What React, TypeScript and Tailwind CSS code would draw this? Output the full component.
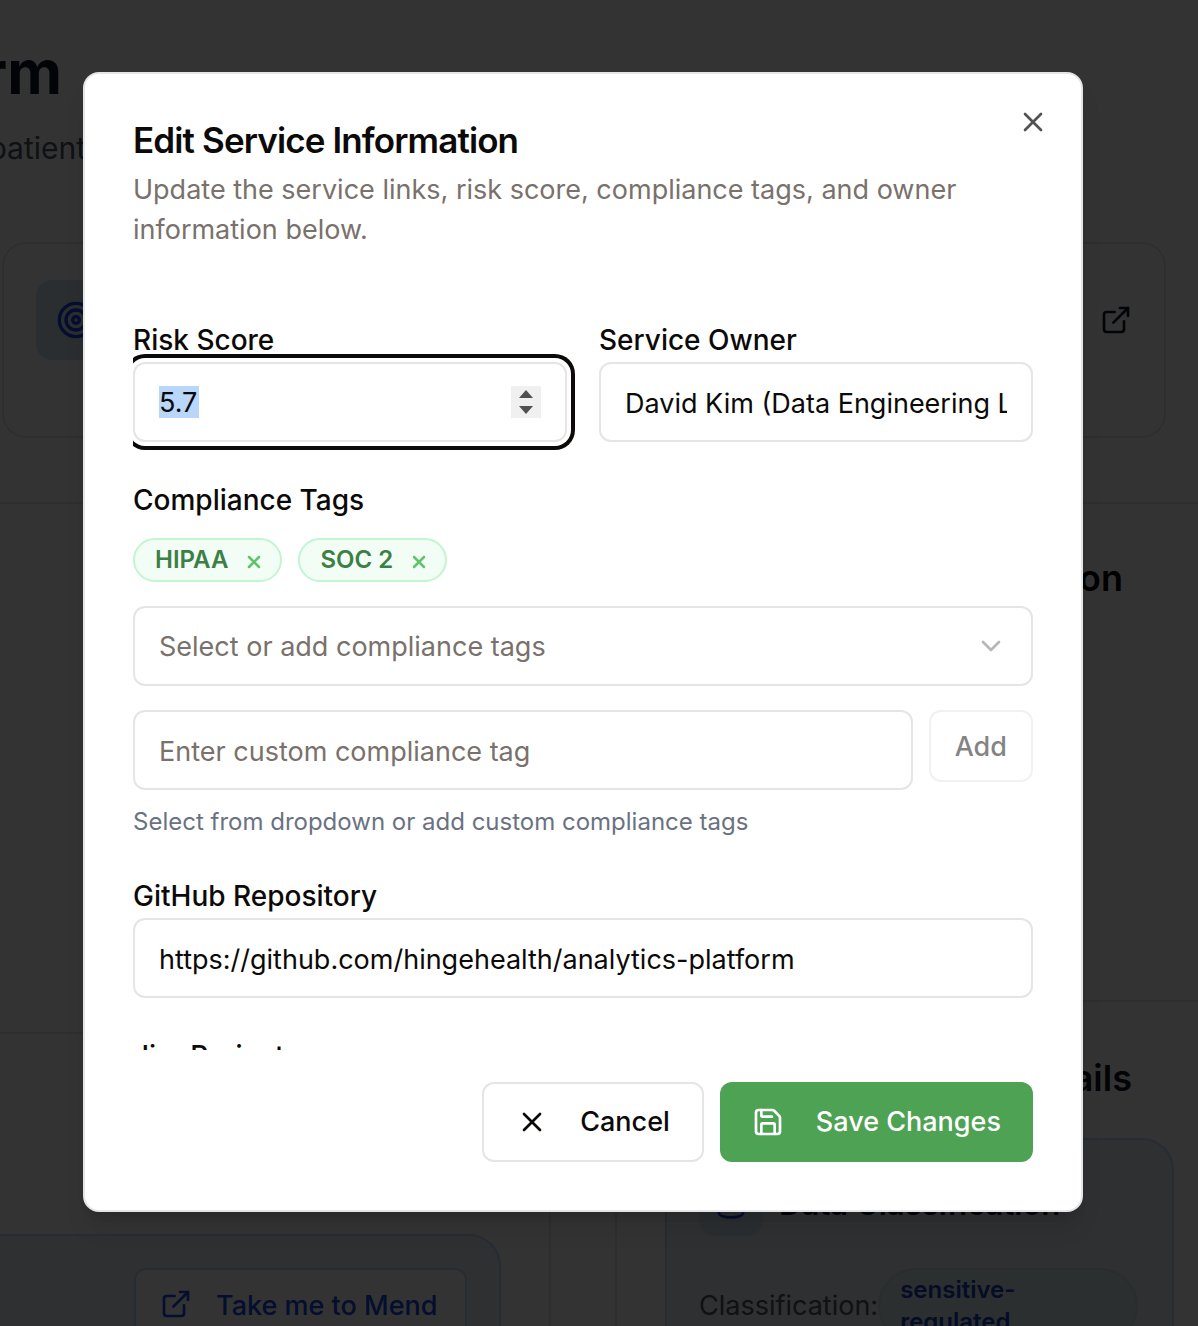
import { ChevronDown, Database, ExternalLink, Save, Target, X } from "lucide-react";

const field =
  "h-20 w-full min-w-0 rounded-xl border-2 border-neutral-200 bg-white px-6 pt-0.5 text-[27px] text-stone-950 placeholder:text-stone-500 focus:outline-none";
const label = "text-[28px] leading-7 font-medium text-stone-950";

function Tag({ name }: { name: string }) {
  return (
    <span className="flex h-11 items-center gap-4 rounded-full border-2 border-[#c4f5d1] bg-[#f2fdf5] pr-4 pl-5 text-2xl font-semibold text-[#3d7f45]">
      {name}
      <button type="button" aria-label={`Remove ${name}`} className="pt-1 text-[#5fc46c]">
        <X className="size-5" strokeWidth={3} />
      </button>
    </span>
  );
}

function Background() {
  return (
    <div aria-hidden="true" className="flex h-full flex-col overflow-hidden bg-white">
      <div className="flex h-[504px] shrink-0 flex-col border-b-2 border-gray-200">
        <div className="flex h-[242px] flex-col pt-8">
          <div className="flex w-[62px] justify-end text-[60px] leading-[80px] font-bold text-gray-900">rm</div>
          <div className="flex w-[86px] justify-end pt-4 text-[30px] leading-10 text-gray-600">patient</div>
        </div>
        <div className="mr-8 ml-0.5 flex h-[196px] items-start justify-between rounded-3xl border-2 border-gray-200 px-8 pt-9">
          <span className="flex size-20 items-center justify-center rounded-2xl bg-[#d3e6f2] text-blue-700">
            <Target className="size-10" />
          </span>
          <ExternalLink className="mt-6 size-8 text-gray-900" />
        </div>
      </div>
      <div className="flex min-h-0 grow items-stretch justify-between">
        <div className="flex w-[551px] flex-col border-r-2 border-gray-200 pt-[528px]">
          <div className="flex grow flex-col border-t-2 border-gray-200 pt-[200px]">
            <div className="mr-12 flex grow justify-end rounded-tr-[32px] border-t-2 border-r-2 border-blue-200 bg-[#eaeff8] pt-8 pr-8">
              <div className="flex h-20 w-[333px] shrink-0 items-start gap-6 rounded-xl border-2 border-blue-200 bg-white px-6 pt-4 text-[27px] leading-10 font-medium whitespace-nowrap text-blue-700">
                <ExternalLink className="mt-0.5 size-8 shrink-0" />
                Take me to Mend
              </div>
            </div>
          </div>
        </div>
        <div className="flex w-[583px] flex-col border-l-2 border-gray-200">
          <div className="h-[498px] shrink-0 border-b-2 border-gray-200 pt-12 pr-[75px] text-right text-4xl leading-[52px] font-semibold text-black">
            Information
          </div>
          <div className="flex grow flex-col pt-[52px] pr-6 pl-12">
            <div className="pr-[42px] text-right text-4xl leading-[48px] font-semibold text-gray-900">Details</div>
            <div className="mt-9 flex grow flex-col rounded-t-[32px] border-x-2 border-t-2 border-blue-200 bg-[#eaeff8] px-8 pt-8">
              <div className="flex h-16 items-center gap-4 text-[31px] font-semibold text-gray-900">
                <span className="flex size-16 items-center justify-center rounded-2xl bg-[#d3e6f2] text-blue-700">
                  <Database className="size-8" />
                </span>
                Data Classification
              </div>
              <div className="mt-8 flex items-start text-[27px] text-gray-600">
                <span className="pt-4 leading-[44px]">Classification:</span>
                <span className="w-[260px] rounded-[40px] border-2 border-[#cfe0ee] bg-[#d9e8f0] px-5 py-1 text-2xl leading-8 font-semibold text-blue-800">
                  sensitive-
                  <br />
                  regulated
                </span>
              </div>
            </div>
          </div>
        </div>
      </div>
    </div>
  );
}

export default function App() {
  return (
    <div className="relative h-screen overflow-hidden font-['Inter',sans-serif]">
      <Background />
      <div className="absolute inset-0 flex items-stretch justify-center bg-black/80 pt-[72px] pr-[115px] pb-[114px] pl-[83px]">
        <section
          role="dialog"
          aria-labelledby="dialog-title"
          className="relative flex w-full max-w-[1000px] flex-col rounded-2xl border-2 border-neutral-200 bg-white p-12 shadow-xl"
        >
          <button type="button" aria-label="Close" className="absolute top-8 right-8 text-neutral-600">
            <X className="size-8" />
          </button>
          <h2 id="dialog-title" className="text-[35px] leading-9 font-semibold tracking-tight text-stone-950">
            Edit Service Information
          </h2>
          <p className="mt-3 text-[27px] leading-10 text-stone-500">
            Update the service links, risk score, compliance tags, and owner information below.
          </p>

          <form id="service-form" className="mt-8 flex min-h-0 grow flex-col overflow-hidden pt-11">
            <div className="grid shrink-0 grid-cols-2 gap-8">
              <div className="flex flex-col gap-2">
                <label htmlFor="risk" className={label}>Risk Score</label>
                <div className="flex h-20 items-center justify-between rounded-xl border-2 border-neutral-200 bg-white px-6 ring-4 ring-stone-950 ring-offset-4">
                  <input
                    id="risk"
                    type="text"
                    inputMode="decimal"
                    defaultValue="5.7"
                    className="h-8 w-10 bg-[#b9d6fb] pt-0.5 text-[27px] text-stone-950 focus:outline-none"
                  />
                  <span className="flex h-8 w-[30px] items-center justify-center bg-[#f0f0f0]">
                    <svg viewBox="0 0 14 24" className="h-6 w-3.5 fill-[#505050]" aria-hidden="true">
                      <path d="M7 0l7 8H0zM7 24l7-8H0z" />
                    </svg>
                  </span>
                </div>
              </div>
              <div className="flex flex-col gap-2">
                <label htmlFor="owner" className={label}>Service Owner</label>
                <input id="owner" type="text" defaultValue="David Kim (Data Engineering Lead)" className={field} />
              </div>
            </div>

            <div className="mt-11 flex shrink-0 flex-col">
              <label htmlFor="tags" className={label}>Compliance Tags</label>
              <div className="mt-6 flex gap-4">
                <Tag name="HIPAA" />
                <Tag name="SOC 2" />
              </div>
              <div className="relative mt-6">
                <select id="tags" className="h-20 w-full appearance-none rounded-xl border-2 border-neutral-200 bg-white px-6 pt-0.5 text-[27px] text-stone-500">
                  <option>Select or add compliance tags</option>
                </select>
                <ChevronDown className="pointer-events-none absolute top-6 right-[26px] size-8 text-[#b9b7b5]" />
              </div>
              <div className="mt-6 flex items-start gap-4">
                <input type="text" aria-label="Custom compliance tag" placeholder="Enter custom compliance tag" className={field} />
                <button
                  type="button"
                  disabled
                  className="h-[72px] shrink-0 rounded-xl border-2 border-neutral-200 px-6 pt-0.5 text-[27px] font-medium text-stone-950 opacity-50"
                >
                  Add
                </button>
              </div>
              <p className="mt-4 text-2xl leading-8 text-gray-500">Select from dropdown or add custom compliance tags</p>
            </div>

            <div className="mt-11 flex shrink-0 flex-col gap-2">
              <label htmlFor="github" className={label}>GitHub Repository</label>
              <input id="github" type="text" defaultValue="https://github.com/hingehealth/analytics-platform" className={field} />
            </div>
            <div className="mt-11 flex shrink-0 flex-col gap-2">
              <label htmlFor="jira" className={label}>Jira Project</label>
              <input id="jira" type="text" className={field} />
            </div>
          </form>

          <div className="mt-8 flex justify-end gap-4">
            <button
              type="button"
              className="flex h-20 items-center gap-8 rounded-xl border-2 border-neutral-200 px-8 text-[27px] font-medium text-stone-950"
            >
              <X className="size-8" />
              Cancel
            </button>
            <button
              type="submit"
              form="service-form"
              className="flex h-20 items-center gap-8 rounded-xl bg-[#4ea254] px-8 text-[27px] font-medium text-white"
            >
              <Save className="size-8" />
              Save Changes
            </button>
          </div>
        </section>
      </div>
    </div>
  );
}
